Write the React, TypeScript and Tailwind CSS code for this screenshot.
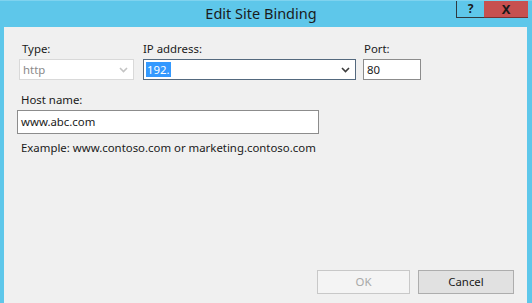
import React from "react";

const Chevron = ({ color }: { color: string }) => (
  <svg width="9" height="6" viewBox="0 0 9 6" fill="none">
    <path d="M1 1 L4.5 4.5 L8 1" stroke={color} strokeWidth="1.6" />
  </svg>
);

export default function App() {
  return (
    <div
      className="w-[532px] h-[303px] bg-[#5ec7ea] flex flex-col overflow-hidden"
      style={{ fontFamily: '"Segoe UI", "Noto Sans", "Open Sans", sans-serif' }}
    >
      <div className="relative h-[27px] shrink-0 flex items-center justify-center border-t border-[#7fd3ef]">
        <span className="text-[14.5px] text-[#1b1b1b] pr-[10px] -mt-[1px]">Edit Site Binding</span>
        <div className="absolute top-0 right-[4px] flex h-[17px]">
          <div className="w-[28px] h-[17px] border-l border-b border-[#2f3a40] flex items-center justify-center text-[12px] font-bold text-[#1a1a1a] leading-none">
            ?
          </div>
          <div className="w-[44px] h-[17px] bg-[#c75050] border-b border-[#7a3030] flex items-center justify-center text-[13px] font-bold text-[#1a1a1a] leading-none">
            X
          </div>
        </div>
      </div>
      <div className="flex-1 ml-[4px] mr-[5px] mb-0 bg-[#f0f0f0] flex flex-col text-[11.4px] text-[#1a1a1a] px-[14px] pt-[13px]">
        <div className="flex gap-[9px]">
          <div className="flex flex-col ml-[1px]">
            <span className="ml-[3px] h-[18px] leading-[18px]">Type:</span>
            <div className="mt-[1px] w-[115px] h-[21px] border border-[#d9d9d9] bg-white flex items-center justify-between pl-[3px] pr-[5px]">
              <span className="text-[#8a8a8a]">http</span>
              <Chevron color="#c4c4c4" />
            </div>
          </div>
          <div className="flex flex-col">
            <span className="h-[18px] leading-[18px]">IP address:</span>
            <div className="mt-[1px] w-[213px] h-[21px] border border-[#54697e] bg-white flex items-center justify-between pl-[2px] pr-[5px]">
              <span className="bg-[#3399ff] text-white leading-[15px] px-[1px]">192.</span>
              <Chevron color="#3c3c3c" />
            </div>
          </div>
          <div className="flex flex-col -ml-[2px]">
            <span className="ml-[1px] h-[18px] leading-[18px]">Port:</span>
            <div className="mt-[1px] w-[58px] h-[21px] border border-[#8c8c8c] bg-white flex items-center pl-[3px]">
              <span>80</span>
            </div>
          </div>
        </div>
        <div className="flex flex-col mt-[11px]">
          <span className="ml-[3px] h-[18px] leading-[18px]">Host name:</span>
          <div className="-ml-[1px] mt-[1px] w-[302px] h-[24px] border border-[#8c8c8c] bg-white flex items-center pl-[3px]">
            <span>www.abc.com</span>
          </div>
          <span className="ml-[3px] mt-[5px] leading-[18px]">Example: www.contoso.com or marketing.contoso.com</span>
        </div>
        <div className="flex-1" />
        <div className="flex justify-end gap-[8px] mb-[9px] -mr-[1px]">
          <div className="w-[93px] h-[24px] border border-[#c8c8c8] bg-[#f4f4f4] flex items-center justify-center text-[#a8a8a8]">
            OK
          </div>
          <div className="w-[96px] h-[24px] border border-[#adadad] bg-[#e1e1e1] flex items-center justify-center text-[#1a1a1a]">
            Cancel
          </div>
        </div>
      </div>
    </div>
  );
}
